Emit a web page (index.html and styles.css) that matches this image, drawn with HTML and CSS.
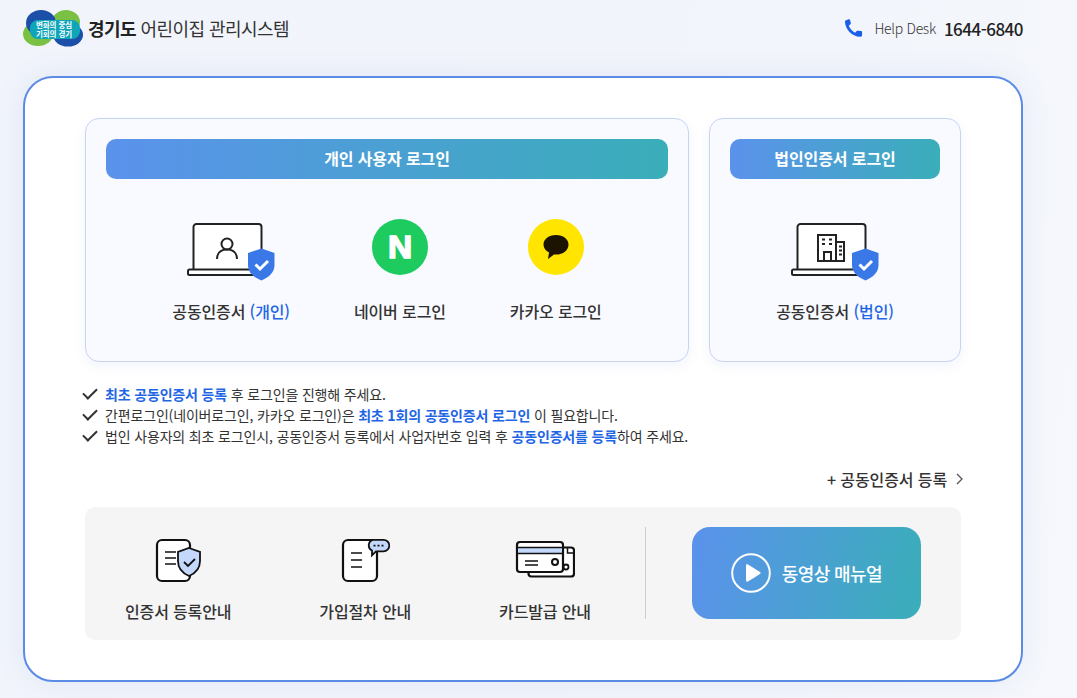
FILE: index.html
```html
<!DOCTYPE html>
<html lang="ko">
<head>
<meta charset="utf-8">
<title>경기도 어린이집 관리시스템</title>
<link rel="stylesheet" href="styles.css">
</head>
<body>
<header class="header">
  <div class="brand">
    <svg class="logo" width="62" height="38" viewBox="0 0 62 38">
      <ellipse cx="15" cy="25" rx="15" ry="12" fill="#7ac143"/>
      <ellipse cx="43" cy="13" rx="14" ry="12" fill="#7ac143"/>
      <ellipse cx="18" cy="14" rx="15" ry="13" fill="#1b4fa8"/>
      <ellipse cx="45" cy="26" rx="15" ry="11.500" fill="#1b4fa8"/>
      <rect x="7" y="11" width="50" height="19" rx="8" fill="#0ea5b8"/>
      <text class="logo-text" x="31" y="18.500" text-anchor="middle">변화의 중심</text>
      <text class="logo-text" x="31" y="27.500" text-anchor="middle">기회의 경기</text>
    </svg>
    <h1 class="brand-name"><strong>경기도</strong> 어린이집 관리시스템</h1>
  </div>
  <div class="help">
    <svg class="help-icon" width="20" height="20" viewBox="0 0 24 24"><path fill="#1a5fe8" d="M6.600 1.600 2.400 3.200C1.900 12.600 10.800 22.800 21.200 22.400c1.200-.1 1.700-.9 1.700-1.800v-3.400c0-.9-.6-1.400-1.400-1.500l-3.600-.5c-.6-.1-1.100.1-1.500.5l-1.800 1.900C11.400 16 8 12.600 6.900 9.300l2.100-1.900c.4-.4.5-.9.4-1.400L8.600 2.600C8.400 1.800 7.500 1.300 6.600 1.600Z"/></svg>
    <span class="help-label">Help Desk</span>
    <span class="help-number">1644-6840</span>
  </div>
</header>

<main class="card">
  <div class="panels">
    <section class="panel panel-wide">
      <h2 class="panel-title">개인 사용자 로그인</h2>
      <div class="options">
        <a class="option">
          <svg class="option-icon" width="88" height="60" viewBox="0 0 88 60">
            <path d="M6.500 48V6a3 3 0 0 1 3-3h62a3 3 0 0 1 3 3v42" fill="#fff" stroke="#222" stroke-width="2"/>
            <rect x="1" y="48.500" width="68" height="5.500" rx="1.500" fill="#fff" stroke="#222" stroke-width="2"/>
            <circle cx="40" cy="23" r="5.500" fill="none" stroke="#222" stroke-width="2"/>
            <path d="M30 38c0-6 4-9.500 10-9.500s10 3.500 10 9.500" fill="none" stroke="#222" stroke-width="2"/>
            <path d="M74.500 27.500 87.500 32V44c0 7-5 12-13 15.500C66 56 61 51 61 44V32Z" fill="#3b78e7"/>
            <path d="M68.500 43.500 73 48l8-8" fill="none" stroke="#fff" stroke-width="3"/>
          </svg>
          <span class="option-label">공동인증서 <em class="accent">(개인)</em></span>
        </a>
        <a class="option">
          <span class="round naver"><span class="naver-n">N</span></span>
          <span class="option-label">네이버 로그인</span>
        </a>
        <a class="option">
          <span class="round kakao">
            <svg width="28" height="26" viewBox="0 0 28 26"><path fill="#1c1400" d="M14 1C6.800 1 1.500 5.200 1.500 10.500c0 3.400 2.200 6.300 5.500 8l-1 6.500 6-4.500c.7.100 1.300.1 2 .1 7.200 0 12.500-4.200 12.500-10.100C26.500 5.200 21.200 1 14 1Z"/></svg>
          </span>
          <span class="option-label">카카오 로그인</span>
        </a>
      </div>
    </section>
    <section class="panel panel-narrow">
      <h2 class="panel-title">법인인증서 로그인</h2>
      <div class="options">
        <a class="option">
          <svg class="option-icon" width="88" height="60" viewBox="0 0 88 60">
            <path d="M6.500 48V6a3 3 0 0 1 3-3h62a3 3 0 0 1 3 3v42" fill="#fff" stroke="#222" stroke-width="2"/>
            <rect x="1" y="48.500" width="68" height="5.500" rx="1.500" fill="#fff" stroke="#222" stroke-width="2"/>
            <path d="M27 40V14h18v26ZM45 21h8v19h-8M33 40v-9h7v9" fill="none" stroke="#222" stroke-width="2"/>
            <path d="M31 18.500h3M38 18.500h3M31 23h3M38 23h3M48 25.500h3M48 29.500h3M48 33.500h3" stroke="#222" stroke-width="2"/>
            <path d="M74.500 27.500 87.500 32V44c0 7-5 12-13 15.500C66 56 61 51 61 44V32Z" fill="#3b78e7"/>
            <path d="M68.500 43.500 73 48l8-8" fill="none" stroke="#fff" stroke-width="3"/>
          </svg>
          <span class="option-label">공동인증서 <em class="accent">(법인)</em></span>
        </a>
      </div>
    </section>
  </div>

  <ul class="notes">
    <li class="note"><b class="accent">최초 공동인증서 등록</b> 후 로그인을 진행해 주세요.</li>
    <li class="note">간편로그인(네이버로그인, 카카오 로그인)은 <b class="accent">최초 1회의 공동인증서 로그인</b> 이 필요합니다.</li>
    <li class="note">법인 사용자의 최초 로그인시, 공동인증서 등록에서 사업자번호 입력 후 <b class="accent">공동인증서를 등록</b>하여 주세요.</li>
  </ul>

  <div class="register-row">
    <a class="register">+ 공동인증서 등록
      <svg width="10" height="14" viewBox="0 0 10 14"><path d="M2 2l5 5-5 5" fill="none" stroke="#555" stroke-width="1.300"/></svg>
    </a>
  </div>

  <section class="guide">
    <a class="guide-item">
      <svg class="guide-icon" width="46" height="46" viewBox="0 0 46 46">
        <path d="M7 3h23a5 5 0 0 1 5 5v31a5 5 0 0 1-5 5H7a5 5 0 0 1-5-5V8a5 5 0 0 1 5-5Z" fill="#fff" stroke="#111" stroke-width="2.200"/>
        <path d="M10 15h11M10 21h11M10 27h11" stroke="#111" stroke-width="1.600"/>
        <path d="M34 11l11 4v9c0 7-4 12-11 15-7-3-11-8-11-15v-9Z" fill="#c4d8fb" stroke="#111" stroke-width="1.800"/>
        <path d="M29 25l4 4 7-7" fill="none" stroke="#111" stroke-width="1.800"/>
      </svg>
      <span class="guide-label">인증서 등록안내</span>
    </a>
    <a class="guide-item">
      <svg class="guide-icon" width="50" height="46" viewBox="0 0 50 46">
        <path d="M8 3h24a5 5 0 0 1 5 5v31a5 5 0 0 1-5 5H8a5 5 0 0 1-5-5V8a5 5 0 0 1 5-5Z" fill="#fff" stroke="#111" stroke-width="2.200"/>
        <path d="M11 16h11M11 23h11M11 30h11" stroke="#111" stroke-width="1.600"/>
        <path d="M33 2.800h10.500a5.800 5.800 0 0 1 0 11.600H36l-4 4v-4.800a5.800 5.800 0 0 1 1-10.800Z" fill="#c4d8fb" stroke="#111" stroke-width="1.800"/>
        <path d="M33.500 8.600h2M37.500 8.600h2M41.500 8.600h2" stroke="#111" stroke-width="1.600"/>
      </svg>
      <span class="guide-label">가입절차 안내</span>
    </a>
    <a class="guide-item">
      <svg class="guide-icon" width="60" height="46" viewBox="0 0 60 46">
        <rect x="13.500" y="10.500" width="45.500" height="29" rx="3" fill="#fff" stroke="#111" stroke-width="2.200"/>
        <circle cx="51" cy="30" r="2.500" fill="none" stroke="#111" stroke-width="1.800"/>
        <path d="M52.500 10.500v5.500h6.500" fill="none" stroke="#111" stroke-width="1.500"/>
        <rect x="2" y="5" width="46" height="30" rx="3" fill="#fff" stroke="#111" stroke-width="2.200"/>
        <rect x="3" y="11" width="44" height="5" fill="#c4d8fb"/>
        <path d="M2 10.500h46M2 16.500h46" stroke="#111" stroke-width="1.500"/>
        <path d="M10 24h13M10 28h13" stroke="#111" stroke-width="1.600"/>
        <circle cx="40" cy="25" r="3" fill="none" stroke="#111" stroke-width="2"/>
      </svg>
      <span class="guide-label">카드발급 안내</span>
    </a>
    <div class="divider"></div>
    <a class="video">
      <svg class="video-icon" width="40" height="40" viewBox="0 0 40 40">
        <circle cx="20" cy="20" r="18.800" fill="none" stroke="#fff" stroke-width="2"/>
        <path d="M15 12.500c0-1 1-1.500 2-1l12 7.500c.8.500.8 1.500 0 2l-12 7.500c-1 .5-2 0-2-1Z" fill="#fff"/>
      </svg>
      <span>동영상 매뉴얼</span>
    </a>
  </section>
</main>
</body>
</html>
```
FILE: styles.css
```css
* { box-sizing: border-box; }
html, body { margin: 0; height: 698px; overflow: hidden; }
body {
  background: linear-gradient(100deg, #f1f4fb 0%, #f2f5fb 70%, #f6f8fd 100%);
  color: #222;
  font-family: "Noto Sans CJK KR", "Noto Sans", sans-serif;
  letter-spacing: -0.1px;
}
a { color: inherit; text-decoration: none; }
em { font-style: normal; }
h1, h2, ul { margin: 0; padding: 0; }

.header {
  height: 56px;
  padding: 0 54px 0 23px;
  display: flex;
  align-items: center;
  justify-content: space-between;
}
.brand { display: flex; align-items: center; gap: 3px; }
.logo-text { font-size: 7.5px; font-weight: 700; fill: #fff; letter-spacing: -0.1px; }
.brand-name { font-size: 18px; font-weight: 400; color: #333; letter-spacing: -0.55px; }
.brand-name strong { font-weight: 700; color: #222; }
.help { display: flex; align-items: center; }
.help-icon { margin-right: 11px; flex-shrink: 0; }
.help-label { font-size: 14px; font-weight: 300; color: #333; margin-right: 8px; letter-spacing: -0.3px; }
.help-number { font-size: 17px; font-weight: 500; color: #222; letter-spacing: -0.5px; }

.card {
  margin: 20px 54px 0 23px;
  height: 606px;
  padding: 40px 60px 0;
  background: #fff;
  border: 2px solid #5b8be5;
  border-radius: 30px;
  box-shadow: 0 0 30px rgba(90, 120, 200, 0.10);
}
.panels { display: flex; gap: 20px; height: 244px; }
.panel {
  padding: 20px;
  background: #f9faff;
  border: 1px solid #c6d6f1;
  border-radius: 14px;
  box-shadow: 0 4px 12px rgba(90, 120, 200, 0.08);
}
.panel-wide { width: 604px; }
.panel-narrow { width: 252px; }
.panel-title {
  height: 40px;
  border-radius: 10px;
  background: linear-gradient(90deg, #5b92ec, #3aaeb9);
  color: #fff;
  font-size: 16px;
  font-weight: 700;
  line-height: 38px;
  text-align: center;
}
.options { display: flex; justify-content: center; gap: 64px; padding-top: 40px; }
.option { display: flex; flex-direction: column; align-items: center; }
.option-icon { flex-shrink: 0; margin: 2px 0 -2px; }
.round {
  width: 56px;
  height: 56px;
  margin: 0 0 4px;
  border-radius: 50%;
  display: flex;
  align-items: center;
  justify-content: center;
}
.naver { background: #1ecb5f; }
.naver-n {
  color: #fff;
  font-family: "Liberation Sans", sans-serif;
  font-size: 31px;
  font-weight: 700;
  line-height: 1;
  letter-spacing: 0;
  -webkit-text-stroke: 1.500px #fff;
  transform: scaleX(1.08);
}
.kakao { background: #ffe500; }
.option-label { margin-top: 20px; font-size: 16px; font-weight: 500; line-height: 24px; color: #333; white-space: nowrap; letter-spacing: -0.13px; }
.accent { color: #1f66e5; }

.notes { list-style: none; margin: 22px 0 0 -4px; }
.note {
  position: relative;
  padding-left: 24px;
  font-size: 14px;
  line-height: 21px;
  color: #333;
  letter-spacing: -0.16px;
}
.note b { font-weight: 700; }
.note::before {
  content: "";
  position: absolute;
  left: 2px;
  top: 4px;
  width: 12px;
  height: 6px;
  border-left: 2px solid #333;
  border-bottom: 2px solid #333;
  transform: rotate(-45deg);
}
.register-row { display: flex; justify-content: flex-end; margin: 20px -4px 0 0; }
.register { display: flex; align-items: center; gap: 8px; font-size: 16px; font-weight: 500; line-height: 24px; color: #333; }

.guide {
  display: flex;
  align-items: stretch;
  gap: 88px;
  height: 133px;
  margin-top: 16px;
  padding: 20px 40px 21px;
  background: #f5f5f5;
  border-radius: 10px;
}
.guide-item { display: flex; flex-direction: column; align-items: center; padding-top: 10px; }
.guide-icon { flex-shrink: 0; }
.guide-label { margin-top: 16px; font-size: 16px; font-weight: 500; line-height: 24px; color: #333; white-space: nowrap; letter-spacing: -0.15px; }
.divider { width: 1px; background: #ccc; margin: 0 46px 0 -34px; }
.video {
  width: 229px;
  margin-left: -88px;
  display: flex;
  align-items: center;
  justify-content: center;
  gap: 11px;
  border-radius: 18px;
  background: linear-gradient(100deg, #5b92ec, #3aaeb9);
  color: #fff;
  font-size: 18px;
  font-weight: 500;
  letter-spacing: -0.6px;
}
.video-icon { flex-shrink: 0; }
```
